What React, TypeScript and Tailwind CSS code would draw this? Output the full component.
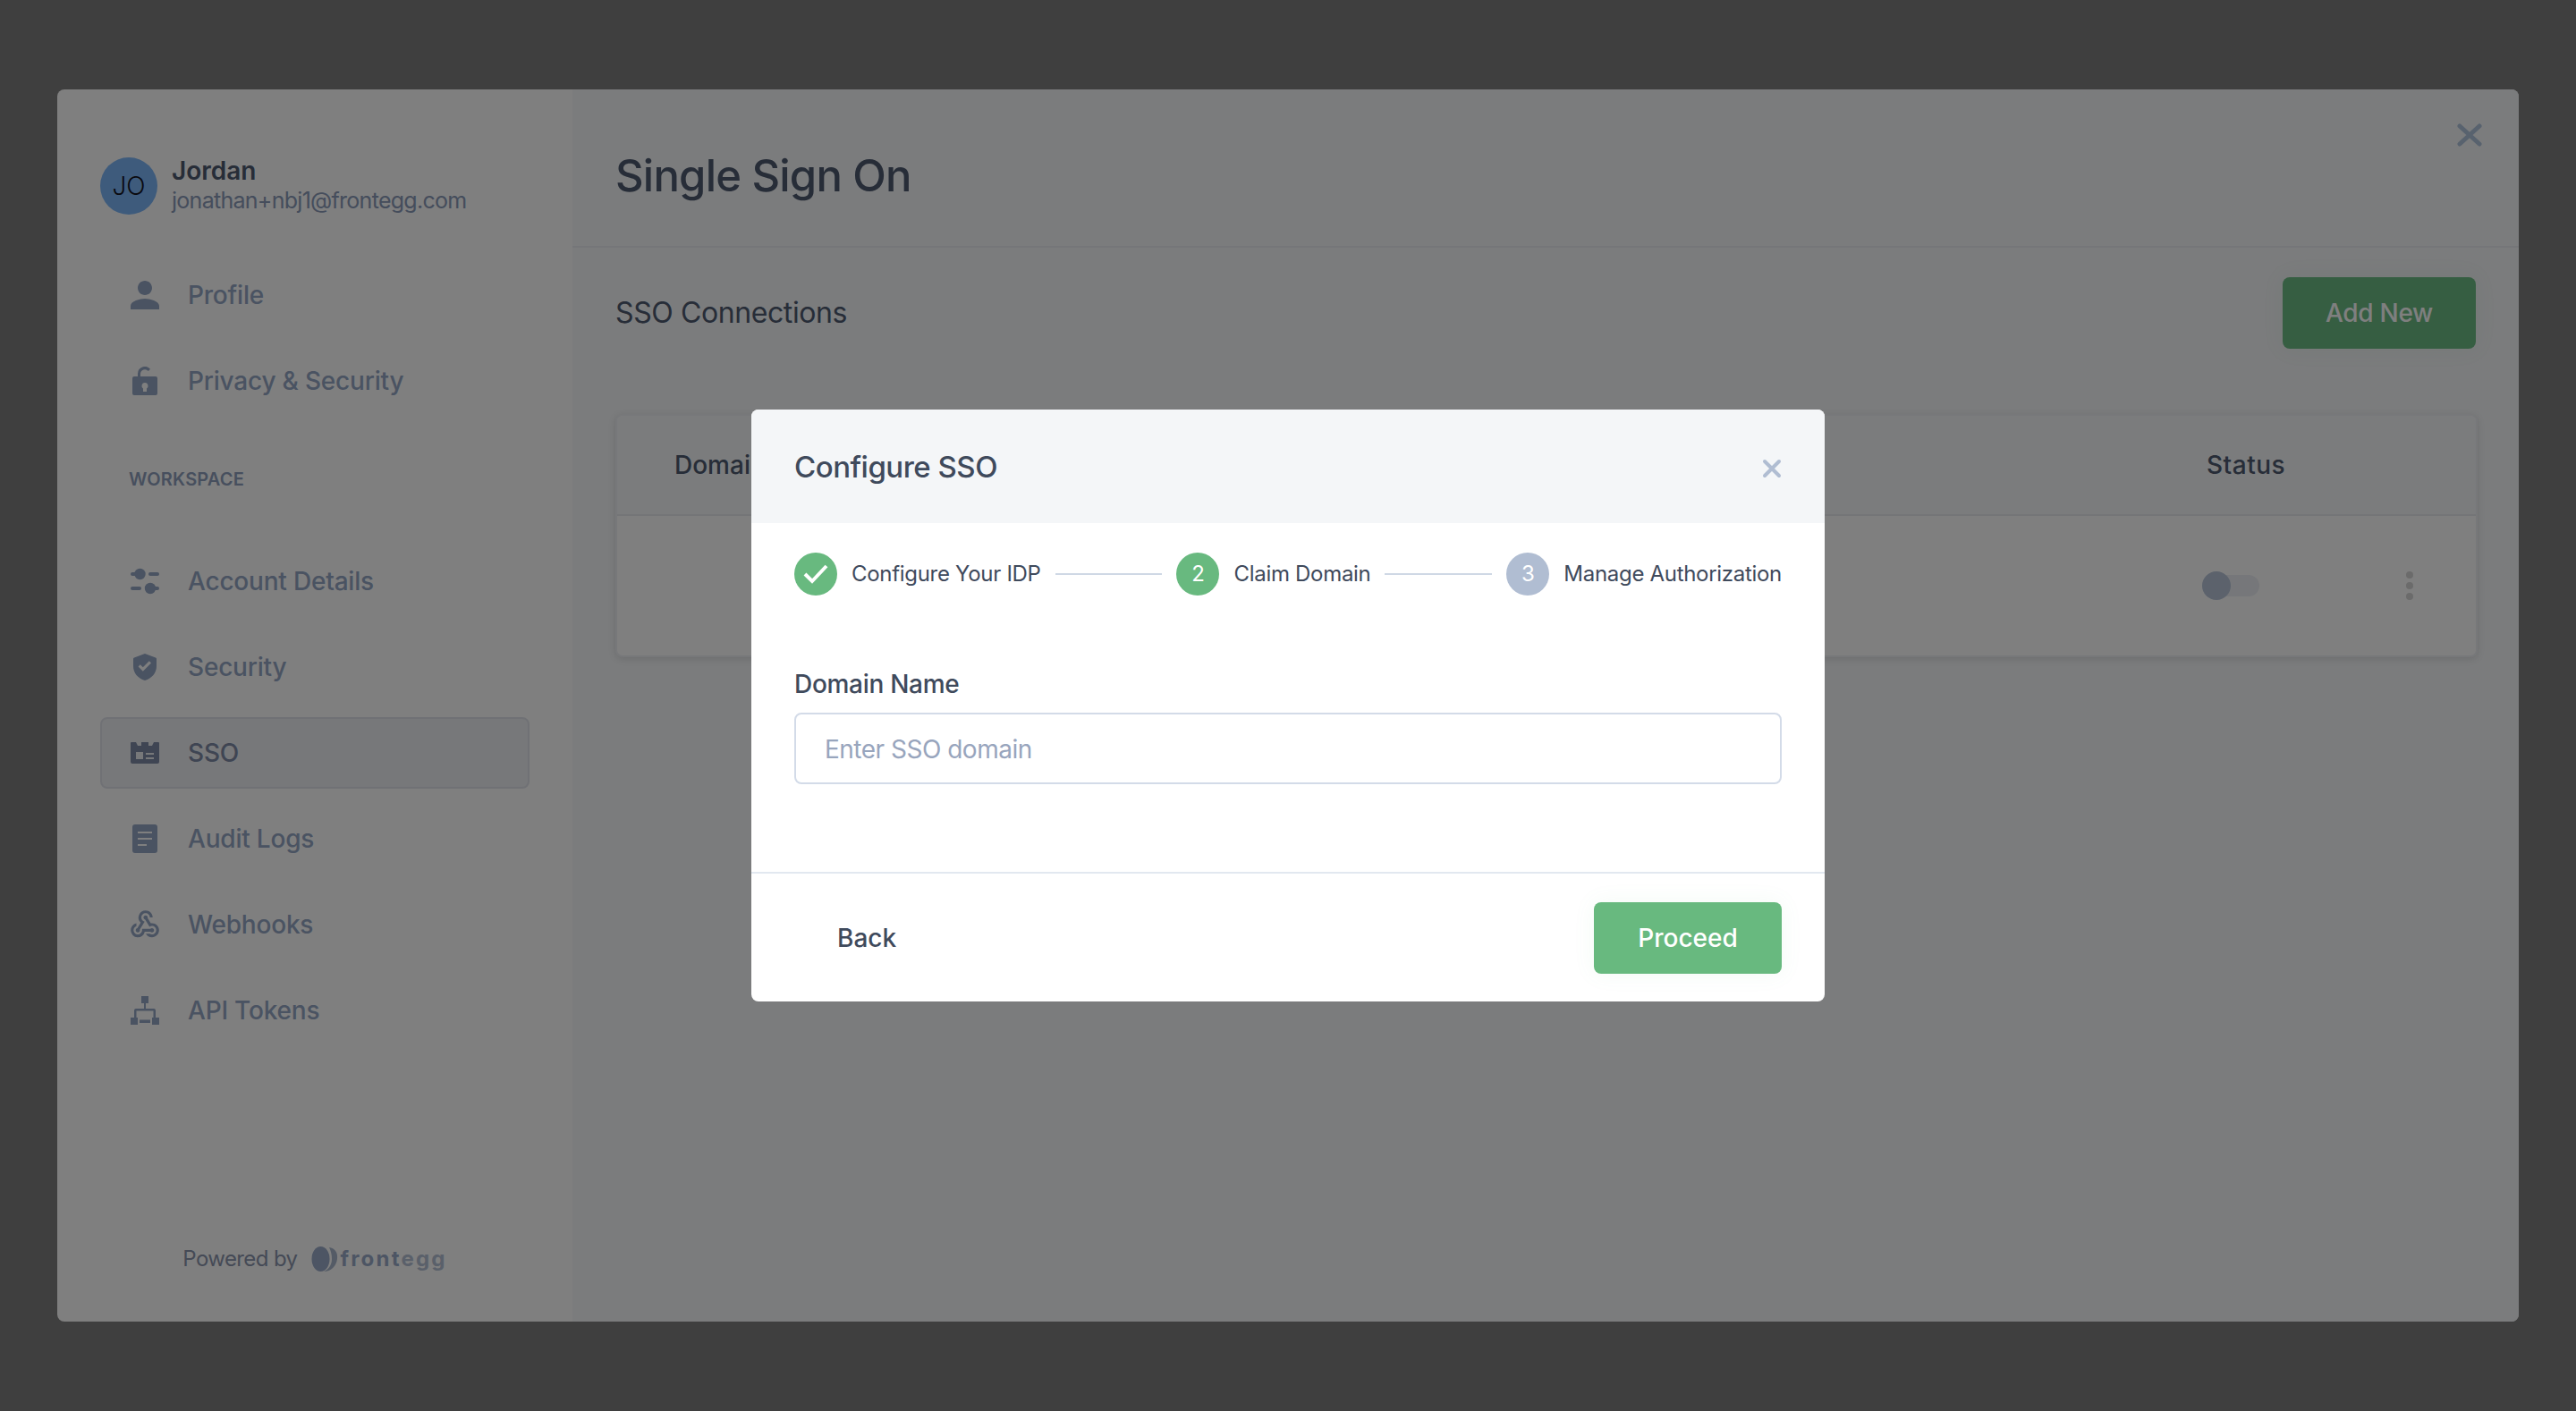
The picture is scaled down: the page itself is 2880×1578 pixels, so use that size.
import { MdWebhook } from 'react-icons/md';
import type { ReactNode } from 'react';

const font = { fontFamily: 'Inter, "Noto Sans", sans-serif' };

function PersonIcon() {
  return (
    <svg width="32" height="32" viewBox="4 4 16 16" fill="currentColor">
      <path d="M12 12c2.21 0 4-1.79 4-4s-1.79-4-4-4-4 1.79-4 4 1.79 4 4 4zm0 2c-2.67 0-8 1.34-8 4v2h16v-2c0-2.66-5.33-4-8-4z" />
    </svg>
  );
}

function LockIcon() {
  return (
    <svg width="28" height="32" viewBox="0 0 28 32" fill="currentColor">
      <path
        fillRule="evenodd"
        d="M2 11h24a2 2 0 0 1 2 2v17a2 2 0 0 1-2 2H2a2 2 0 0 1-2-2V13a2 2 0 0 1 2-2zm12 7a3.5 3.5 0 0 0-2 6.4V28h4v-3.6A3.5 3.5 0 0 0 14 18z"
      />
      <path d="M6 12V8a8 8 0 0 1 14-5.3L17.8 5A5 5 0 0 0 9 8v4z" />
    </svg>
  );
}

function TuneIcon() {
  return (
    <svg width="32" height="30" viewBox="0 0 32 30" fill="currentColor">
      <circle cx="10.5" cy="7" r="6.2" />
      <rect x="0" y="5" width="8" height="4" rx="2" />
      <rect x="20" y="5" width="12" height="4" rx="2" />
      <circle cx="22" cy="23" r="6.2" />
      <rect x="0" y="21" width="12" height="4" rx="2" />
      <rect x="26" y="21" width="6" height="4" rx="2" />
    </svg>
  );
}

function ShieldIcon() {
  return (
    <svg width="26" height="30" viewBox="0 0 26 30" fill="currentColor">
      <path
        fillRule="evenodd"
        d="M13 0 25 4.5a1.5 1.5 0 0 1 1 1.4V14c0 7.5-5 13.500-13 16C5 27.500 0 21.500 0 14V5.900a1.500 1.500 0 0 1 1-1.400L13 0zm7 10.500-2.200-2.200-7 7-3-3L5.600 14.500l5.200 5.200 9.200-9.200z"
      />
    </svg>
  );
}

function SsoIcon() {
  return (
    <svg width="32" height="24" viewBox="0 0 32 24" fill="currentColor">
      <path
        fillRule="evenodd"
        d="M1 0h5l2 4h4V0h8v4h4l2-4h5a1 1 0 0 1 1 1v21a2 2 0 0 1-2 2H2a2 2 0 0 1-2-2V1a1 1 0 0 1 1-1zm5 11v8h8v-8H6zm11 1v2h9v-2h-9zm0 5v2h9v-2h-9z"
      />
    </svg>
  );
}

function ArticleIcon() {
  return (
    <svg width="28" height="32" viewBox="0 0 28 32" fill="currentColor">
      <path
        fillRule="evenodd"
        d="M3 0h22a3 3 0 0 1 3 3v26a3 3 0 0 1-3 3H3a3 3 0 0 1-3-3V3a3 3 0 0 1 3-3zm3 8v2h16V8H6zm0 7v2h16v-2H6zm0 7v2h10v-2H6z"
      />
    </svg>
  );
}

function TokensIcon() {
  return (
    <svg width="32" height="32" viewBox="0 0 32 32" fill="currentColor">
      <rect x="12" y="0" width="8" height="8" />
      <rect x="15" y="8" width="2" height="6" />
      <path d="M6 14h20a2 2 0 0 1 2 2v8h-2.500v-7.500h-19V24H4v-8a2 2 0 0 1 2-2z" />
      <rect x="0" y="24" width="8" height="8" />
      <rect x="24" y="24" width="8" height="8" />
      <rect x="10" y="26.500" width="12" height="3.500" />
    </svg>
  );
}

function NavItem({ icon, label, active = false }: { icon: ReactNode; label: string; active?: boolean }) {
  return (
    <div
      className={`flex h-[80px] w-[480px] items-center rounded-lg border-2 px-[32px] ${
        active ? 'border-[#e0e3ea] bg-[#eef0f4] text-[#7e8aa6]' : 'border-transparent text-[#94a6c4]'
      }`}
    >
      <span className="flex w-[32px] items-center justify-center">{icon}</span>
      <span className="ml-[32px] text-[28px] font-medium tracking-[-0.2px]">{label}</span>
    </div>
  );
}

function Step({ mark, label, tone }: { mark: ReactNode; label: string; tone: string }) {
  return (
    <div className="flex items-center gap-[16px]">
      <span className={`flex h-[48px] w-[48px] items-center justify-center rounded-full text-[24px] text-white ${tone}`}>
        {mark}
      </span>
      <span className="text-[24px] tracking-[-0.3px] text-[#3f4a5c]">{label}</span>
    </div>
  );
}

export default function App() {
  return (
    <div className="relative flex h-screen w-full items-center justify-center bg-[#7e7e7e]" style={font}>
      <div className="relative flex h-[1378px] w-[2752px] overflow-hidden rounded-lg bg-white">
        <aside className="flex w-[576px] flex-col pl-[48px] pt-[76px]">
          <div className="flex h-[64px] items-center gap-[16px]">
            <div className="flex h-[64px] w-[64px] items-center justify-center rounded-full bg-[#7cb6f8] text-[28px] font-light text-[#14141f]">
              JO
            </div>
            <div className="-mt-[2px]">
              <div className="text-[28px] font-semibold leading-[34px] text-[#4e5a70]">Jordan</div>
              <div className="text-[25px] leading-[32px] tracking-[-0.72px] text-[#8a9ab8]">jonathan+nbj1@frontegg.com</div>
            </div>
          </div>

          <nav className="mt-[50px] flex flex-col gap-[16px]">
            <NavItem icon={<PersonIcon />} label="Profile" />
            <NavItem icon={<LockIcon />} label="Privacy & Security" />
          </nav>

          <div className="ml-[32px] mt-[58px] text-[20px] font-semibold leading-[24px] tracking-[0.2px] text-[#8f9fbc]">
            WORKSPACE
          </div>

          <nav className="mt-[62px] flex flex-col gap-[16px]">
            <NavItem icon={<TuneIcon />} label="Account Details" />
            <NavItem icon={<ShieldIcon />} label="Security" />
            <NavItem icon={<SsoIcon />} label="SSO" active />
            <NavItem icon={<ArticleIcon />} label="Audit Logs" />
            <NavItem icon={<MdWebhook size={38} className="shrink-0" />} label="Webhooks" />
            <NavItem icon={<TokensIcon />} label="API Tokens" />
          </nav>

          <div className="-ml-[48px] mt-auto flex items-center justify-center gap-[16px] pb-[50px]">
            <span className="text-[24px] leading-[40px] tracking-[-0.6px] text-[#8a94ac]">Powered by</span>
            <span className="flex items-center gap-[2px]">
              <svg width="30" height="30" viewBox="0 0 30 30">
                <path d="M20 2c6 1 10 5 9 13-1 8-7 14-15 14 7-3 9-9 9-14 0-5-1-9-3-13z" fill="#a8b6cc" />
                <ellipse cx="10.500" cy="15" rx="10" ry="14" fill="#9aabc8" />
              </svg>
              <span className="text-[24px] font-bold leading-[30px] tracking-[2.2px] text-[#9aabc8]">
                front<span className="text-[#b4c0d4]">egg</span>
              </span>
            </span>
          </div>
        </aside>

        <main className="flex-1 bg-[#f6f8fa]">
          <header className="flex h-[177px] items-center border-b-2 border-[#eaedf2] px-[48px] pt-[18px]">
            <h1 className="text-[49px] font-medium tracking-[-0.8px] text-[#4e5a70]">Single Sign On</h1>
          </header>

          <section className="px-[46px]">
            <div className="flex items-center justify-between pl-[2px] pr-[2px] pt-[33px]">
              <h2 className="text-[32px] tracking-[-0.4px] text-[#4e5a70]">SSO Connections</h2>
              <button className="flex h-[80px] w-[216px] items-center justify-center rounded-lg bg-[#6cbc84] text-[28px] font-medium tracking-[-0.3px] text-white shadow-[0_0_24px_rgba(108,188,132,0.08)]">
                Add New
              </button>
            </div>

            <div className="ml-[2px] mt-[73px] overflow-hidden rounded-lg border-2 border-[#eef0f4] bg-white shadow-[0_2px_8px_rgba(0,0,0,0.12)]">
              <div className="flex h-[112px] items-center justify-between border-b-2 border-[#e8eaef] bg-[#f6f8fa] pl-[64px]">
                <span className="text-[28px] font-medium text-[#4e5a70]">Domain</span>
                <span className="w-[301px] text-[28px] font-medium tracking-[0.5px] text-[#4e5a70]">Status</span>
              </div>
              <div className="flex h-[156px] items-center justify-end pr-[70px]">
                <div className="relative mr-[164px] h-[24px] w-[64px] rounded-full bg-[#eceff4]">
                  <span className="absolute -top-[4px] left-0 h-[32px] w-[32px] rounded-full bg-[#b8c5d9]" />
                </div>
                <div className="flex flex-col gap-[4px]">
                  <span className="h-[8px] w-[8px] rounded-full bg-[#d6d6d6]" />
                  <span className="h-[8px] w-[8px] rounded-full bg-[#d6d6d6]" />
                  <span className="h-[8px] w-[8px] rounded-full bg-[#d6d6d6]" />
                </div>
              </div>
            </div>
          </section>
        </main>

        <svg className="absolute right-[41px] top-[37px] text-[#b0c4dd]" width="28" height="28" viewBox="0 0 28 28" fill="none" stroke="currentColor" strokeWidth="5" strokeLinecap="round">
          <path d="M3 4l22 20M25 4 3 24" />
        </svg>
      </div>

      <div className="absolute inset-0 flex items-center justify-center bg-black/50">
        <div className="w-[1200px] overflow-hidden rounded-lg bg-white">
          <div className="flex h-[127px] items-center justify-between bg-[#f4f6f8] px-[48px]">
            <span className="pt-[2px] text-[33px] font-medium tracking-[-0.5px] text-[#3f4a5c]">Configure SSO</span>
            <svg className="mt-[4px] text-[#b0bdd2]" width="22" height="22" viewBox="0 0 22 22" fill="none" stroke="currentColor" strokeWidth="4" strokeLinecap="round">
              <path d="M3 3l16 16M19 3 3 19" />
            </svg>
          </div>

          <div className="px-[48px] pt-[33px]">
            <div className="flex items-center">
              <Step
                tone="bg-[#68b97f]"
                label="Configure Your IDP"
                mark={
                  <svg width="30" height="24" viewBox="0 0 30 24" fill="none" stroke="white" strokeWidth="4">
                    <path d="M3 12l8 8L27 3" />
                  </svg>
                }
              />
              <span className="mx-[16px] h-[2px] flex-1 bg-[#cfd8e5]" />
              <Step tone="bg-[#68b97f]" label="Claim Domain" mark="2" />
              <span className="mx-[16px] h-[2px] flex-1 bg-[#cfd8e5]" />
              <Step tone="bg-[#b0bdd2]" label="Manage Authorization" mark="3" />
            </div>

            <label className="mt-[81px] block text-[28px] font-medium leading-[36px] tracking-[-0.3px] text-[#3f4a5c]">Domain Name</label>
            <input
              className="mt-[14px] block h-[80px] w-full rounded-lg border-2 border-[#d3dbe8] px-[32px] pt-[2px] text-[28px] tracking-[-0.5px] outline-none placeholder:text-[#98a5bd]"
              placeholder="Enter SSO domain"
            />
          </div>

          <div className="mt-[98px] flex h-[145px] items-center justify-between border-t-2 border-[#e2e8f0] px-[48px]">
            <button className="ml-[48px] text-[28px] font-medium text-[#3f4a5c]">Back</button>
            <button className="flex h-[80px] w-[210px] items-center justify-center rounded-lg bg-[#68b97f] text-[28px] font-medium text-white shadow-[0_0_24px_rgba(104,185,127,0.08)]">
              Proceed
            </button>
          </div>
        </div>
      </div>
    </div>
  );
}
